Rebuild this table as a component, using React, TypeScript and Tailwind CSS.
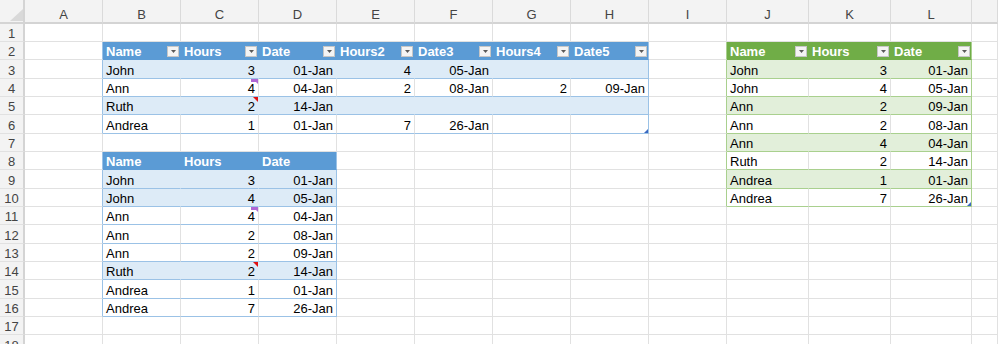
import React from 'react';

type Theme = {
  head: string;
  headR: string;
  headB: string;
  band: string;
  bandR: string;
  lineB: string;
  lineR: string;
};

const BLUE: Theme = {
  head: 'bg-[#5b9bd5]',
  headR: 'border-r-[#5b9bd5]',
  headB: 'border-b-[#5b9bd5]',
  band: 'bg-[#ddebf7]',
  bandR: 'border-r-[#ddebf7]',
  lineB: 'border-b-[#9bc2e6]',
  lineR: 'border-r-[#9bc2e6]',
};

const GREEN: Theme = {
  head: 'bg-[#70ad47]',
  headR: 'border-r-[#70ad47]',
  headB: 'border-b-[#70ad47]',
  band: 'bg-[#e2efda]',
  bandR: 'border-r-[#e2efda]',
  lineB: 'border-b-[#a9d08e]',
  lineR: 'border-r-[#a9d08e]',
};

const GRID_R = 'border-r-[#e1e1e1]';
const GRID_B = 'border-b-[#e1e1e1]';

type CellInfo = {
  text?: string;
  right?: boolean;
  header?: boolean;
  bg?: string;
  bR?: string;
  bB?: string;
  filter?: boolean;
  comment?: 'purple' | 'red';
  handle?: boolean;
};

const cells: Record<string, CellInfo> = {};
const key = (c: number, r: number) => `${c}-${r}`;
function set(c: number, r: number, info: CellInfo) {
  cells[key(c, r)] = { ...(cells[key(c, r)] || {}), ...info };
}

function addTable(
  theme: Theme,
  col0: number,
  row0: number,
  headers: string[],
  rows: string[][],
  bands: boolean[],
  filter: boolean,
  handle: boolean
) {
  const last = headers.length - 1;
  for (let r = row0; r <= row0 + rows.length; r++) set(col0 - 1, r, { bR: theme.lineR });
  headers.forEach((h, j) =>
    set(col0 + j, row0, {
      text: h,
      header: true,
      bg: theme.head,
      bR: j === last ? theme.lineR : theme.headR,
      bB: theme.headB,
      filter,
    })
  );
  rows.forEach((row, i) =>
    row.forEach((v, j) => {
      const band = bands[i];
      set(col0 + j, row0 + 1 + i, {
        text: v,
        right: j > 0,
        bg: band ? theme.band : 'bg-white',
        bR: j === last ? theme.lineR : band ? theme.bandR : GRID_R,
        bB: theme.lineB,
      });
    })
  );
  if (handle) set(col0 + last, row0 + rows.length, { handle: true });
}

addTable(
  BLUE,
  1,
  2,
  ['Name', 'Hours', 'Date', 'Hours2', 'Date3', 'Hours4', 'Date5'],
  [
    ['John', '3', '01-Jan', '4', '05-Jan', '', ''],
    ['Ann', '4', '04-Jan', '2', '08-Jan', '2', '09-Jan'],
    ['Ruth', '2', '14-Jan', '', '', '', ''],
    ['Andrea', '1', '01-Jan', '7', '26-Jan', '', ''],
  ],
  [true, false, true, false],
  true,
  true
);

addTable(
  BLUE,
  1,
  8,
  ['Name', 'Hours', 'Date'],
  [
    ['John', '3', '01-Jan'],
    ['John', '4', '05-Jan'],
    ['Ann', '4', '04-Jan'],
    ['Ann', '2', '08-Jan'],
    ['Ann', '2', '09-Jan'],
    ['Ruth', '2', '14-Jan'],
    ['Andrea', '1', '01-Jan'],
    ['Andrea', '7', '26-Jan'],
  ],
  [true, true, false, false, false, true, false, false],
  false,
  false
);

addTable(
  GREEN,
  9,
  2,
  ['Name', 'Hours', 'Date'],
  [
    ['John', '3', '01-Jan'],
    ['John', '4', '05-Jan'],
    ['Ann', '2', '09-Jan'],
    ['Ann', '2', '08-Jan'],
    ['Ann', '4', '04-Jan'],
    ['Ruth', '2', '14-Jan'],
    ['Andrea', '1', '01-Jan'],
    ['Andrea', '7', '26-Jan'],
  ],
  [true, false, true, false, true, false, true, false],
  true,
  true
);

set(2, 4, { comment: 'purple' });
set(2, 5, { comment: 'red' });
set(2, 11, { comment: 'purple' });
set(2, 14, { comment: 'red' });

const LETTERS = ['A', 'B', 'C', 'D', 'E', 'F', 'G', 'H', 'I', 'J', 'K', 'L', ''];
const ROWS = Array.from({ length: 18 }, (_, i) => i + 1);

function FilterButton() {
  return (
    <div className="absolute right-[1px] bottom-[2px] w-[12px] h-[11px] bg-[#f4f4f4] border border-[#c6c6c6] flex items-center justify-center">
      <svg width="5" height="3" viewBox="0 0 5 3">
        <polygon points="0,0 5,0 2.5,3" fill="#595959" />
      </svg>
    </div>
  );
}

function Cell({ c, r }: { c: number; r: number }) {
  const info = cells[key(c, r)] || {};
  const bg = info.bg ?? 'bg-white';
  const bR = info.bR ?? GRID_R;
  const bB = info.bB ?? GRID_B;
  const align = info.right ? 'justify-end' : 'justify-start';
  const txt = info.header ? 'font-bold text-white' : 'text-black';
  return (
    <div className={`relative flex items-end border-r border-b px-[3px] whitespace-nowrap ${bg} ${bR} ${bB} ${align} ${txt}`}>
      {info.text ? <span>{info.text}</span> : null}
      {info.filter ? <FilterButton /> : null}
      {info.comment === 'purple' ? (
        <svg className="absolute top-0 right-0" width="7" height="5" viewBox="0 0 7 5">
          <path d="M0 0H7V5L5 3H0Z" fill="#b066d4" />
        </svg>
      ) : null}
      {info.comment === 'red' ? (
        <svg className="absolute top-0 right-0" width="5" height="5" viewBox="0 0 5 5">
          <polygon points="0,0 5,0 5,5" fill="#e01010" />
        </svg>
      ) : null}
      {info.handle ? (
        <svg className="absolute bottom-0 right-0" width="4" height="4" viewBox="0 0 4 4">
          <polygon points="4,0 4,4 0,4" fill="#3b68c0" />
        </svg>
      ) : null}
    </div>
  );
}

export default function App() {
  return (
    <div className="w-[998px] h-[344px] overflow-hidden bg-white font-['Liberation_Sans',Arial,sans-serif] text-[13px] leading-[15px]">
      <div className="grid grid-cols-[25px_repeat(9,78px)_82px_82px_81px_1fr] grid-rows-[24px_18px_18px_19px_18px_18px_19px_18px_18px_19px_18px_18px_19px_18px_18px_19px_18px_18px_19px]">
        {/* corner */}
        <div className="relative bg-[#f3f3f3] border-r-2 border-b-2 border-r-[#d4d4d4] border-b-[#d4d4d4]">
          <svg className="absolute right-0 bottom-[1px]" width="13" height="12" viewBox="0 0 13 12">
            <polygon points="13,0 13,12 0,12" fill="#d9d9d9" />
          </svg>
        </div>
        {LETTERS.map((l, i) => (
          <div
            key={`h${i}`}
            className="flex items-end justify-center bg-[#f3f3f3] border-r border-b-2 border-r-[#dadada] border-b-[#d4d4d4] text-[#444444]"
          >
            {l}
          </div>
        ))}
        {ROWS.map((r) => (
          <React.Fragment key={`r${r}`}>
            <div className="flex items-end justify-center bg-[#f3f3f3] border-r-2 border-b border-r-[#d4d4d4] border-b-[#e1e1e1] text-[#444444]">
              {r}
            </div>
            {LETTERS.map((_, c) => (
              <Cell key={`c${c}-${r}`} c={c} r={r} />
            ))}
          </React.Fragment>
        ))}
      </div>
    </div>
  );
}
